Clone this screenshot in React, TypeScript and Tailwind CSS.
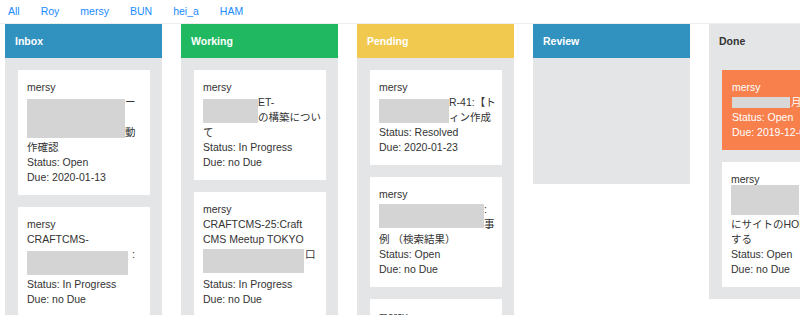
import React from 'react';

const users = ['All', 'Roy', 'mersy', 'BUN', 'hei_a', 'HAM'];

function Box({ w, h, mt = 4, light = false }: { w: number; h: number; mt?: number; light?: boolean }) {
  return (
    <div
      className={light ? 'shrink-0 bg-[#d8d8d8]' : 'shrink-0 bg-[#d4d4d4]'}
      style={{ width: w, height: h, marginTop: mt }}
    />
  );
}

function Redacted({
  w,
  h,
  lines,
  tails,
  mt = 4,
  gap = 0,
  light = false,
}: {
  w: number;
  h: number;
  lines: number;
  tails: string[];
  mt?: number;
  gap?: number;
  light?: boolean;
}) {
  return (
    <div className="flex" style={{ height: lines * 15 }}>
      <Box w={w} h={h} mt={mt} light={light} />
      <div className="flex flex-col whitespace-nowrap" style={{ paddingLeft: gap }}>
        {tails.map((t, i) => (
          <span key={i} className="h-[15px]">
            {t}
          </span>
        ))}
      </div>
    </div>
  );
}

function L({ children }: { children: React.ReactNode }) {
  return <div className="h-[15px] whitespace-nowrap">{children}</div>;
}

function Card({ children, orange = false }: { children: React.ReactNode; orange?: boolean }) {
  return (
    <div
      className={
        orange
          ? 'w-[132px] shrink-0 bg-[#f8804d] px-[10px] py-[10px] text-white'
          : 'w-[132px] shrink-0 bg-white px-[9px] py-[10px] text-[#333]'
      }
    >
      {children}
    </div>
  );
}

function Column({
  title,
  head,
  children,
}: {
  title: string;
  head?: string;
  children?: React.ReactNode;
}) {
  return (
    <div className="w-[157px] min-h-[160px] shrink-0 bg-[#e4e5e7]">
      <div
        className={
          'flex h-[34px] items-center px-[10px] font-bold ' +
          (head ? head + ' text-white' : 'text-[#333]')
        }
      >
        {title}
      </div>
      <div className="flex flex-col gap-3 pb-3 pl-[13px] pr-[12px] pt-3">{children}</div>
    </div>
  );
}

export default function App() {
  return (
    <div className="h-[315px] w-[800px] overflow-hidden bg-white font-['Liberation_Sans','Noto_Sans_CJK_JP',sans-serif] text-[10.5px] leading-[15px]">
      <nav className="flex h-6 items-center gap-[21px] border-b border-[#eeeeee] pl-[8px] text-[#1a8cff]">
        {users.map((u) => (
          <a key={u} href="#" className="leading-none">
            {u}
          </a>
        ))}
      </nav>

      <div className="flex items-start gap-[19px] pl-[5px]">
        <Column title="Inbox" head="bg-[#3192c0]">
          <Card>
            <L>mersy</L>
            <Redacted w={98} h={39} lines={3} tails={['ー', '', '動']} />
            <L>作確認</L>
            <L>Status: Open</L>
            <L>Due: 2020-01-13</L>
          </Card>
          <Card>
            <L>mersy</L>
            <L>CRAFTCMS-</L>
            <Redacted w={101} h={24} lines={2} tails={[':']} gap={4} />
            <L>Status: In Progress</L>
            <L>Due: no Due</L>
          </Card>
        </Column>

        <Column title="Working" head="bg-[#20b962]">
          <Card>
            <L>mersy</L>
            <Redacted w={55} h={24} lines={2} tails={['ET-', 'の構築につい']} />
            <L>て</L>
            <L>Status: In Progress</L>
            <L>Due: no Due</L>
          </Card>
          <Card>
            <L>mersy</L>
            <L>CRAFTCMS-25:Craft</L>
            <L>CMS Meetup TOKYO</L>
            <Redacted w={101} h={24} lines={2} tails={['口']} gap={1} mt={2} />
            <L>Status: In Progress</L>
            <L>Due: no Due</L>
          </Card>
        </Column>

        <Column title="Pending" head="bg-[#f1c94f]">
          <Card>
            <L>mersy</L>
            <Redacted w={70} h={24} lines={2} tails={['R-41:【ト', 'ィン作成']} />
            <L>Status: Resolved</L>
            <L>Due: 2020-01-23</L>
          </Card>
          <Card>
            <L>mersy</L>
            <Redacted w={105} h={24} lines={2} tails={[':', '事']} mt={2} />
            <L>例 （検索結果）</L>
            <L>Status: Open</L>
            <L>Due: no Due</L>
          </Card>
          <Card>
            <L>mersy</L>
            <L>CRAFTCMS-</L>
            <L>Status: Open</L>
          </Card>
        </Column>

        <Column title="Review" head="bg-[#3192c0]" />

        <Column title="Done">
          <Card orange>
            <L>mersy</L>
            <Redacted w={58} h={11} lines={1} tails={['月']} mt={2} light gap={1} />
            <L>Status: Open</L>
            <L>Due: 2019-12-04</L>
          </Card>
          <Card>
            <L>mersy</L>
            <Redacted w={68} h={30} lines={2} tails={['ー', 'ス']} mt={-2} gap={2} />
            <L>にサイトのHOME</L>
            <L>する</L>
            <L>Status: Open</L>
            <L>Due: no Due</L>
          </Card>
        </Column>
      </div>
    </div>
  );
}
